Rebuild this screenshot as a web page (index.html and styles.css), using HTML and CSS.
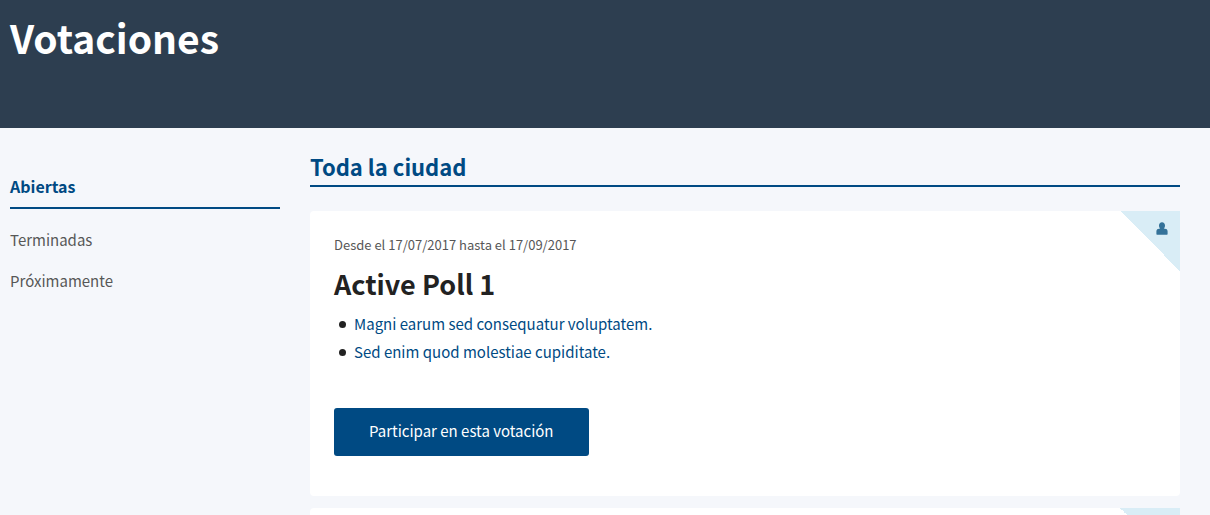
FILE: index.html
```html
<!DOCTYPE html>
<html lang="es">
<head>
<meta charset="utf-8">
<title>Votaciones</title>
<link rel="stylesheet" href="styles.css">
</head>
<body>
<header class="page-header">
  <h1 class="page-title">Votaciones</h1>
</header>
<div class="layout">
  <nav class="side-menu" aria-label="Votaciones">
    <a class="side-link active" href="#abiertas" aria-current="page">Abiertas</a>
    <a class="side-link" href="#terminadas">Terminadas</a>
    <a class="side-link" href="#proximamente">Próximamente</a>
  </nav>
  <main class="polls">
    <h2 class="section-title">Toda la ciudad</h2>
    <article class="poll">
      <div class="corner">
        <svg class="user-icon" viewBox="0 0 12 13" aria-hidden="true"><path d="M6 .3C4.200.3 3 1.600 3 3.500c0 1.400.5 2.500 1.200 3.100L2 6.900C.8 7.200.4 8.200.4 9.400v2.700c0 .4.2.6.6.6h10c.4 0 .6-.2.6-.6V9.400c0-1.200-.4-2.200-1.600-2.500L7.800 6.600C8.500 6 9 4.900 9 3.500 9 1.600 7.800.3 6 .3z"/></svg>
      </div>
      <p class="dates">Desde el 17/07/2017 hasta el 17/09/2017</p>
      <h3 class="poll-title">Active Poll 1</h3>
      <ul class="questions">
        <li><a href="#q1">Magni earum sed consequatur voluptatem.</a></li>
        <li><a href="#q2">Sed enim quod molestiae cupiditate.</a></li>
      </ul>
      <a class="button" href="#participar">Participar en esta votación</a>
    </article>
    <article class="poll-next">
      <div class="corner"></div>
    </article>
  </main>
</div>
</body>
</html>
```
FILE: styles.css
```css
* {
  box-sizing: border-box;
}

body {
  display: flex;
  flex-direction: column;
  min-height: 100vh;
  margin: 0;
  background: #f5f7fb;
  color: #222;
  font-family: "Noto Sans CJK SC", "Noto Sans", sans-serif;
  font-size: 15px;
  line-height: 28px;
}

h1, h2, h3, p, ul {
  margin: 0;
}

a {
  color: #004a83;
  text-decoration: none;
}

.page-header {
  padding: 6px 10px 60px;
  background: #2d3e50;
}

.page-title {
  color: #fff;
  font-size: 39px;
  line-height: 62px;
}

.layout {
  display: grid;
  flex: 1;
  grid-template-columns: 27fr 87fr;
  gap: 30px;
  padding: 24px 30px 0 10px;
}

.side-menu {
  display: flex;
  flex-direction: column;
  gap: 13px;
  padding-top: 20px;
}

.side-link {
  color: #575757;
}

.side-link.active {
  margin-bottom: 4px;
  padding-bottom: 7px;
  border-bottom: 2px solid #004a83;
  color: #004a83;
  font-size: 16px;
  font-weight: 700;
}

.polls {
  display: flex;
  flex-direction: column;
}

.section-title {
  margin-bottom: 24px;
  padding-bottom: 5px;
  border-bottom: 2px solid #004a83;
  color: #004a83;
  font-size: 22px;
  line-height: 28px;
}

.poll,
.poll-next {
  position: relative;
  border-radius: 4px;
  background: #fff;
}

.poll {
  margin-bottom: 12px;
  padding: 24px 24px 40px;
}

.poll-next {
  flex: 1;
  overflow: hidden;
  border-radius: 4px 0 0 0;
}

.corner {
  position: absolute;
  top: 0;
  right: 0;
  width: 60px;
  height: 60px;
  background: linear-gradient(to top right, transparent 50%, #d9edf6 50%);
}

.user-icon {
  position: absolute;
  top: 11px;
  right: 12px;
  width: 12px;
  height: 13px;
  fill: #347299;
}

.dates {
  color: #575757;
  font-size: 13px;
  line-height: 20px;
}

.poll-title {
  margin: 9px 0 6px;
  font-size: 27px;
  line-height: 40px;
}

.questions {
  margin-bottom: 42px;
  padding-left: 5px;
  list-style: none;
}

.questions li {
  display: flex;
  align-items: center;
  gap: 8px;
}

.questions li::before {
  content: "";
  width: 7px;
  height: 7px;
  border-radius: 50%;
  background: #222;
}

.button {
  display: inline-block;
  padding: 9px 35px 11px;
  border-radius: 3px;
  background: #004a83;
  color: #fff;
  vertical-align: top;
}
```
